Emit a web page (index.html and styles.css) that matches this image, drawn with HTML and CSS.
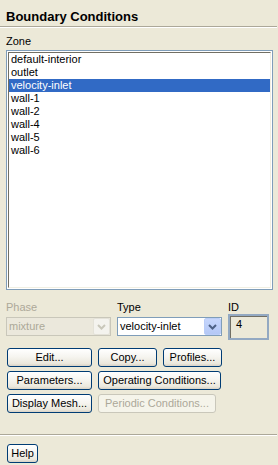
FILE: index.html
```html
<!DOCTYPE html>
<html>
<head>
<meta charset="utf-8">
<link rel="stylesheet" href="styles.css">
</head>
<body>
<div class="panel">
  <div class="title">Boundary Conditions</div>
  <div class="sep"></div>
  <div class="zone-label">Zone</div>
  <div class="listbox">
    <div class="list-inner">
      <div class="row">default-interior</div>
      <div class="row">outlet</div>
      <div class="row sel">velocity-inlet</div>
      <div class="row">wall-1</div>
      <div class="row">wall-2</div>
      <div class="row">wall-4</div>
      <div class="row">wall-5</div>
      <div class="row">wall-6</div>
    </div>
  </div>
  <div class="fields">
    <div class="field f-phase">
      <div class="flabel disabled">Phase</div>
      <div class="combo combo-disabled">
        <span class="combo-text">mixture</span>
        <span class="combo-btn">
          <svg width="15" height="15" viewBox="0 0 15 15"><path d="M4 6 L7.5 9.5 L11 6" fill="none" stroke="#c9c7ba" stroke-width="2"/></svg>
        </span>
      </div>
    </div>
    <div class="field f-type">
      <div class="flabel">Type</div>
      <div class="combo">
        <span class="combo-text">velocity-inlet</span>
        <span class="combo-btn">
          <svg width="15" height="15" viewBox="0 0 15 15"><path d="M4 6 L7.5 9.5 L11 6" fill="none" stroke="#4d6185" stroke-width="2"/></svg>
        </span>
      </div>
    </div>
    <div class="field f-id">
      <div class="flabel">ID</div>
      <div class="idbox">4</div>
    </div>
  </div>
  <div class="buttons">
    <div class="btn-row">
      <button class="btn w-first">Edit...</button>
      <button class="btn w-small">Copy...</button>
      <button class="btn w-small">Profiles...</button>
    </div>
    <div class="btn-row">
      <button class="btn w-first">Parameters...</button>
      <button class="btn w-op">Operating Conditions...</button>
    </div>
    <div class="btn-row">
      <button class="btn w-first">Display Mesh...</button>
      <button class="btn w-per" disabled>Periodic Conditions...</button>
    </div>
  </div>
  <div class="sep sep-bottom"></div>
  <button class="btn help">Help</button>
</div>
</body>
</html>
```
FILE: styles.css
```css
* { box-sizing: border-box; }
html, body {
  margin: 0;
  background: #ece9d8;
}
body {
  font-family: "Liberation Sans", Arial, sans-serif;
  font-size: 11px;
  line-height: 13px;
  color: #000;
  width: 278px;
  height: 465px;
  overflow: hidden;
}
.title {
  font-weight: bold;
  font-size: 13px;
  line-height: 15px;
  padding: 9px 0 0 6px;
}
.sep {
  margin-top: 2px;
  width: 277px;
  height: 2px;
  border-top: 1px solid #aca899;
  border-bottom: 1px solid #fff;
}
.zone-label {
  margin: 7px 0 0 6px;
}
.listbox {
  margin: 2px 0 0 6px;
  width: 267px;
  height: 240px;
  border: 1px solid #7f9db9;
  padding: 1px;
  background: #fff;
}
.list-inner {
  height: 100%;
  border-top: 1px solid #716f64;
  border-left: 1px solid #716f64;
  border-right: 1px solid #f1efe2;
  border-bottom: 1px solid #f1efe2;
}
.row {
  height: 13px;
  padding-left: 2px;
  white-space: nowrap;
}
.row.sel {
  background: #316ac5;
  color: #fff;
}
.fields {
  display: flex;
  gap: 6px;
  margin: 11px 0 0 6px;
}
.field {
  display: flex;
  flex-direction: column;
}
.f-phase, .f-type { width: 105px; }
.f-id { width: 41px; }
.flabel.disabled { color: #aca899; }
.combo {
  margin-top: 3px;
  height: 19px;
  border: 1px solid #7f9db9;
  background: #fff;
  display: flex;
  align-items: center;
}
.combo-text {
  flex: 1;
  padding-left: 2px;
  white-space: nowrap;
}
.combo-btn {
  width: 17px;
  height: 17px;
  display: flex;
  align-items: center;
  justify-content: center;
  border: 1px solid #bacdf8;
  border-radius: 2px;
  background: linear-gradient(#c6d6fc, #b4c8f6);
}
.combo-disabled {
  border-color: #c9c7ba;
  background: #ebe8dc;
  color: #aca899;
}
.combo-disabled .combo-btn {
  border-color: #e4e2d8;
  background: #f4f3ee;
}
.idbox {
  margin-top: 0;
  height: 26px;
  border: 2px solid #93a9c2;
  box-shadow: inset 1px 1px 0 #716f64;
  padding: 2px 0 0 6px;
}
.buttons {
  margin: 8px 0 0 7px;
  display: flex;
  flex-direction: column;
  gap: 4px;
}
.btn-row {
  display: flex;
  gap: 6px;
}
.btn {
  height: 19px;
  font-family: inherit;
  font-size: 11px;
  line-height: 13px;
  color: #000;
  padding: 0;
  border: 1px solid #003c74;
  border-radius: 3px;
  background: linear-gradient(#ffffff, #f6f5f0 45%, #ebe8dd 85%, #d8d2c6);
  white-space: nowrap;
}
.btn:disabled {
  border-color: #c9c7ba;
  background: #f5f4ea;
  color: #aca899;
}
.w-first { width: 85px; }
.w-small { width: 59px; }
.w-op { width: 123px; }
.w-per { width: 118px; }
.sep-bottom { margin-top: 21px; }
.help {
  display: block;
  margin: 8px 0 0 7px;
  width: 31px;
}
```
